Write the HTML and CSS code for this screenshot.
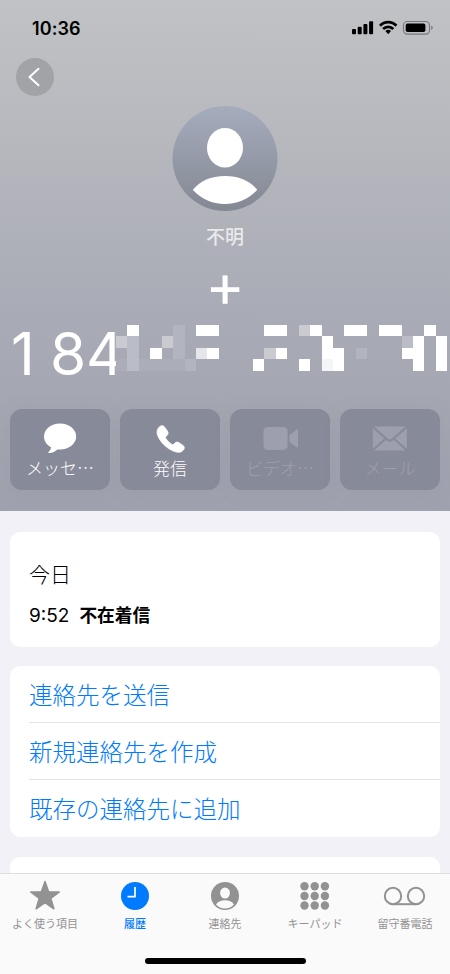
FILE: index.html
```html
<!DOCTYPE html>
<html lang="ja">
<head>
<meta charset="utf-8">
<title>連絡先</title>
<link rel="stylesheet" href="styles.css">
</head>
<body>
<div class="phone">
  <header class="hero">
    <div class="status">
      <span class="clock">10:36</span>
      <svg class="status-icons" width="82" height="16" viewBox="0 0 82 16">
        <rect x="0" y="9" width="4" height="5.300" rx="1"/><rect x="5.700" y="6.700" width="4" height="7.600" rx="1"/><rect x="11.400" y="4" width="4" height="10.300" rx="1"/><rect x="17.100" y="1.300" width="4" height="13" rx="1"/>
        <g fill="none" stroke="#000" stroke-width="2.700"><path d="M28 5.700a11.300 11.300 0 0 1 16.400 0"/><path d="M31.100 9a7.200 7.200 0 0 1 10.200 0"/></g>
        <path d="M33.400 11.100a4.200 4.200 0 0 1 5.600 0l-2.800 3.100z"/>
        <rect x="51.500" y="1.500" width="26" height="12.600" rx="3.800" fill="none" stroke="#77787c" stroke-width="1.100"/>
        <rect x="53.700" y="3.600" width="19.700" height="8.500" rx="1.800"/>
        <path d="M79.200 5.700q1.600.5 1.600 2.100t-1.600 2.100z" fill="#77787c"/>
      </svg>
    </div>
    <div class="back">
      <svg width="38" height="38" viewBox="0 0 38 38"><path d="M22.500 10.700L13.500 19l9 8.300" fill="none" stroke="#fff" stroke-width="2" stroke-linecap="round" stroke-linejoin="round"/></svg>
    </div>
    <svg class="avatar" width="106" height="106" viewBox="0 0 106 106">
      <defs><linearGradient id="av" x1="0" y1="0" x2="0" y2="1"><stop offset="0" stop-color="#a5acbc"/><stop offset="1" stop-color="#848893"/></linearGradient></defs>
      <circle cx="53" cy="52.500" r="52.500" fill="url(#av)"/>
      <ellipse cx="53" cy="41.700" rx="18" ry="19.700" fill="#fff"/>
      <path d="M20.800 83.800C28 75 39 70 53 70s25 5 32.200 13.800C77 93 66 98 53 98s-24-5-32.200-14.200z" fill="#fff"/>
    </svg>
    <div class="unknown">不明</div>
    <div class="plus">+</div>
    <div class="number">
      <span class="one">1</span><span class="eight">8</span><span class="four">4</span>
      <svg class="mosaic" width="331.200" height="45.500" viewBox="0 0 29 4" preserveAspectRatio="none" shape-rendering="crispEdges" fill="#fff">
        <path d="M1 0h1v1h-1zM3 2h1v1h-1zM7 0h2v1h-2zM8 2h1v1h-1zM13 0h2v1h-2zM14 2h1v1h-1zM12 3h1v1h-1zM17 0h1v1h-1zM16 3h1v1h-1zM18 1h1v1h1v2h-2zM20 0h2v1h-2zM23 0h2v1h-2zM27 0h1v1h-1zM26 1h1v3h-1v-1h-1v-1h1zM28 1h1v3h-1z"/>
        <path d="M0 1h1v1h-1zM4 1h1v1h-1zM13 2h1v1h-1zM16 0h1v1h-1z" fill="#c9cbd0"/>
        <path d="M1 1h1v3h-1zM25 1h1v1h-1z" fill="#bbbdc6"/>
        <path d="M5 0h1v3h-1zM6 3h1v1h-1zM21 2h1v1h-1z" fill="#b2b4bf"/>
        <path d="M0 3h1v1h-1zM2 3h4v1h-4z" fill="#abadb9"/>
        <path d="M7 2h1v1h-1z" fill="#e5e6ea"/>
        <path d="M18 3h1v1h-1z" fill="#f4f5f7"/>
      </svg>
    </div>
    <div class="actions">
      <div class="action">
        <svg width="36" height="32" viewBox="0 0 36 32"><path d="M18 .5C9 .5 2 6.200 2 13.500c0 4.500 2.700 8.300 7 10.700-.1 2-.9 3.300-2.300 4.600-.7.700-.3 1.500.6 1.300 3.300-.4 6-1.700 8.200-3.700l2.500.1c9 0 16.200-5.700 16.200-13S27 .5 18 .5z"/></svg>
        <span>メッセ<i>…</i></span>
      </div>
      <div class="action">
        <svg width="36" height="32" viewBox="0 0 36 32"><path transform="translate(-1.500 -.7)" stroke="#fff" stroke-width=".8" d="M8.600 4.900c1.900-2 4.300-2 5.800.2l2.500 3.700c1.200 1.900.8 3.300-1 4.900-1 .9-1.100 1.500-.5 2.500 1.400 2.300 3.500 4.400 5.800 5.800 1 .6 1.600.5 2.500-.5 1.600-1.800 3-2.200 4.900-1l3.700 2.500c1.800 1.300 2 3 .6 4.700-2.700 3.100-6.200 2.900-11 .6C15 25.100 9.800 19.500 7.300 13.500 5.900 10 6.500 7 8.600 4.900z"/></svg>
        <span>発信</span>
      </div>
      <div class="action off">
        <svg width="36" height="32" viewBox="0 0 36 32"><rect x="1.500" y="4" width="24" height="23" rx="4.300"/><path d="M27.500 12l7-5.300q1.800-1 1.800.8v16q0 1.800-1.800.8l-7-5.300z"/></svg>
        <span>ビデオ<i>…</i></span>
      </div>
      <div class="action off">
        <svg width="36" height="32" viewBox="0 0 36 32"><path d="M2 3.500h31.500L20 15.500q-2.200 1.900-4.400 0zM.8 5.200L12.300 15.500.8 25.800zM34.800 5.200L23.300 15.500l11.500 10.300zM13.800 16.700l.7.700q3.300 2.800 6.600 0l.7-.7L33.500 27.500H2z"/></svg>
        <span>メール</span>
      </div>
    </div>
  </header>
  <main class="content">
    <section class="card log">
      <div class="day">今日</div>
      <div class="call"><span>9:52</span><b>不在着信</b></div>
    </section>
    <section class="card links">
      <div class="link">連絡先を送信</div>
      <div class="link">新規連絡先を作成</div>
      <div class="link">既存の連絡先に追加</div>
    </section>
    <section class="card next"></section>
  </main>
  <nav class="tabs">
    <div class="tab">
      <svg width="44" height="32" viewBox="0 0 44 32"><path d="M22 1.500l3.600 10.200 10.700.3-8.500 6.500 3.100 10.300L22 22.700l-8.900 6.100 3.100-10.300L7.700 12l10.700-.3z" stroke="#929292" stroke-width="1.500" stroke-linejoin="round"/></svg>
      <span>よく使う項目</span>
    </div>
    <div class="tab active">
      <svg width="44" height="32" viewBox="0 0 44 32"><circle cx="22" cy="16" r="14"/><path d="M22 7v9.700h-7.500" fill="none" stroke="#fff" stroke-width="1.700"/></svg>
      <span>履歴</span>
    </div>
    <div class="tab">
      <svg width="44" height="32" viewBox="0 0 44 32"><circle cx="22" cy="16" r="14"/><ellipse cx="22" cy="13" rx="4.900" ry="5.600" fill="#fafafa"/><path d="M13 24.500c2-2.800 5.200-4.200 9-4.200s7 1.400 9 4.200c-2.300 2.500-5.500 3.900-9 3.900s-6.700-1.400-9-3.900z" fill="#fafafa"/></svg>
      <span>連絡先</span>
    </div>
    <div class="tab">
      <svg width="44" height="32" viewBox="0 0 44 32"><g><circle cx="11.500" cy="6.300" r="4.200"/><circle cx="21.700" cy="6.300" r="4.200"/><circle cx="31.900" cy="6.300" r="4.200"/><circle cx="11.500" cy="16" r="4.200"/><circle cx="21.700" cy="16" r="4.200"/><circle cx="31.900" cy="16" r="4.200"/><circle cx="11.500" cy="25.500" r="4.200"/><circle cx="21.700" cy="25.500" r="4.200"/><circle cx="31.900" cy="25.500" r="4.200"/></g></svg>
      <span>キーパッド</span>
    </div>
    <div class="tab">
      <svg width="44" height="32" viewBox="0 0 44 32"><g fill="none" stroke="#929292" stroke-width="2"><circle cx="10" cy="16" r="8.200"/><circle cx="33" cy="16" r="8.200"/><path d="M10 24.200h23"/></g></svg>
      <span>留守番電話</span>
    </div>
    <div class="home"></div>
  </nav>
</div>
</body>
</html>
```
FILE: styles.css
```css
* { box-sizing: border-box; }
body {
  margin: 0;
  font-family: Inter, "Noto Sans CJK JP", sans-serif;
  color: #000;
}
.phone {
  width: 450px;
  height: 974px;
  display: flex;
  flex-direction: column;
  overflow: hidden;
  background: #f2f1f8;
}
svg { display: block; flex: none; }
.hero {
  height: 511px;
  flex: none;
  display: flex;
  flex-direction: column;
  align-items: center;
  background: linear-gradient(#c1c2c6 0%, #b8b9be 25%, #a9abb6 60%, #9fa1ae 100%);
}
.status {
  width: 100%;
  height: 58px;
  padding: 18px 16px 0 32px;
  display: flex;
  justify-content: space-between;
}
.clock { font-size: 18px; font-weight: 600; line-height: 22px; letter-spacing: .1px; }
.status-icons { margin-top: 2px; }
.back {
  align-self: flex-start;
  width: 38px;
  height: 38px;
  margin-left: 16px;
  border-radius: 50%;
  background: #a2a3a7;
}
.avatar { margin-top: 10px; }
.unknown {
  margin-top: 12px;
  font-size: 19px;
  line-height: 28px;
  font-weight: 500;
  color: #e8e9ec;
}
.plus {
  height: 72px;
  font-size: 60px;
  line-height: 66px;
  font-weight: 400;
  color: #fff;
}
.number {
  width: 100%;
  height: 60px;
  display: flex;
  font-size: 58.500px;
  line-height: 60px;
  font-weight: 400;
  color: #fff;
}
.one { width: 41.500px; padding-left: 11px; }
.eight { width: 44.500px; padding-left: 8.500px; }
.four { width: 30.300px; }
.mosaic { margin-top: 1px; }
.actions {
  width: 430px;
  margin-top: 25px;
  display: grid;
  grid-template-columns: repeat(4, 100px);
  gap: 10px;
}
.action {
  height: 81px;
  border-radius: 12px;
  background: #878a99;
  box-shadow: 0 2px 18px rgba(120, 123, 138, .12);
  display: flex;
  flex-direction: column;
  align-items: center;
  padding-top: 13.500px;
  color: #fff;
  fill: #fff;
  font-size: 17px;
  line-height: 26px;
  font-weight: 300;
}
.action span { height: 26px; font-family: "Noto Sans CJK JP", sans-serif; }
.action i { font-style: normal; }
.off { color: #9d9faf; fill: #9d9faf; }
.content { flex: 1; padding: 20.500px 10px 0; overflow: hidden; }
.card { background: #fff; border-radius: 10px; margin-bottom: 19.500px; }
.log { height: 115px; padding: 27px 19px 0; }
.day { font-size: 21px; line-height: 32px; font-weight: 300; }
.call { display: flex; gap: 10px; margin-top: 11px; font-size: 17.700px; line-height: 27px; }
.call span { font-size: 19px; }
.call b { font-weight: 700; margin-top: .5px; }
.links { height: 171px; padding-left: 19px; }
.link {
  height: 57px;
  border-bottom: 1px solid #e4e4e6;
  font-size: 23.500px;
  line-height: 60px;
  font-weight: 300;
  color: #007aff;
}
.link:last-child { border-bottom: 0; }
.next { height: 60px; }
.tabs {
  height: 101px;
  flex: none;
  border-top: 1px solid #dedee0;
  background: #fafafa;
  display: grid;
  grid-template-columns: repeat(5, 90px);
  grid-template-rows: 84px 6px;
}
.tab {
  display: flex;
  flex-direction: column;
  align-items: center;
  padding-top: 6px;
  font-size: 11px;
  line-height: 20px;
  font-weight: 400;
  color: #929292;
  fill: #929292;
}
.tab span { margin-top: 2px; }
.active { color: #007aff; fill: #007aff; font-weight: 500; }
.home {
  grid-column: 1 / -1;
  justify-self: center;
  width: 161px;
  height: 6px;
  border-radius: 3px;
  background: #000;
}
```
